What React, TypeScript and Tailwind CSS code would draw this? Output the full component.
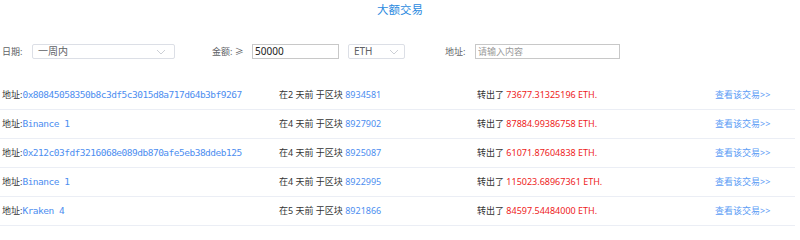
import { useState } from "react";

const rows = [
  { addr: "0x80845058350b8c3df5c3015d8a717d64b3bf9267", days: 2, block: "8934581", amount: "73677.31325196" },
  { addr: "Binance 1", days: 4, block: "8927902", amount: "87884.99386758" },
  { addr: "0x212c03fdf3216068e089db870afe5eb38ddeb125", days: 4, block: "8925087", amount: "61071.87604838" },
  { addr: "Binance 1", days: 4, block: "8922995", amount: "115023.68967361" },
  { addr: "Kraken 4", days: 5, block: "8921866", amount: "84597.54484000" },
];

const Chevron = () => (
  <svg width="10" height="6" viewBox="0 0 10 6" className="text-[#c0c4cc]">
    <path d="M1 1l4 4 4-4" fill="none" stroke="currentColor" strokeWidth="0.8" />
  </svg>
);

const App = () => {
  const [amount, setAmount] = useState("50000");
  const [addr, setAddr] = useState("");

  return (
    <div
      className="w-[800px] h-[240px] bg-white text-[9px] text-[#333]"
      style={{ fontFamily: '"Noto Sans", "Noto Sans CJK SC", sans-serif' }}
    >
      <h1 className="text-center text-[11.5px] leading-[18px] pt-[1px] text-[#2a8ae0]">大额交易</h1>

      <div className="flex items-center mt-[25px] h-[15px] text-[#606266]">
        <span className="ml-[2px] w-[30px]">日期:</span>
        <div className="w-[143px] h-[15px] border border-[#dcdfe6] rounded-[2px] flex items-center justify-between pl-[5px] pr-[8px] text-[10px] text-[#606266]">
          <span>一周内</span>
          <Chevron />
        </div>
        <span className="ml-[37px] w-[40px]">金额: ≥</span>
        <input
          value={amount}
          onChange={(e) => setAmount(e.target.value)}
          className="w-[87px] h-[15px] border border-[#c8c8c8] px-[2px] text-[10px] text-[#222] outline-none"
        />
        <div className="ml-[9px] w-[57px] h-[15px] border border-[#dcdfe6] rounded-[2px] flex items-center justify-between pl-[5px] pr-[5px] text-[10px]">
          <span>ETH</span>
          <Chevron />
        </div>
        <span className="ml-[40px] w-[30px]">地址:</span>
        <input
          value={addr}
          onChange={(e) => setAddr(e.target.value)}
          placeholder="请输入内容"
          className="w-[145px] h-[15px] border border-[#c8c8c8] px-[2px] text-[9px] outline-none placeholder:text-[#9a9a9a]"
        />
      </div>

      <div className="mt-[22px] w-[795px]">
        {rows.map((r, i) => (
          <div
            key={i}
            className="grid grid-cols-[277px_198px_238px_1fr] items-center h-[29px] border-b border-[#ebeef5] pl-[2px]"
          >
            <div className="flex items-center">
              <span>地址:</span>
              <span
                className="text-[#4d8ef0] text-[9.5px] tracking-[-0.5px]"
                style={{ fontFamily: '"DejaVu Sans Mono", monospace' }}
              >
                {r.addr}
              </span>
            </div>
            <div>
              在{r.days} 天前 于区块 <span className="text-[#4d8ef0]">{r.block}</span>
            </div>
            <div>
              转出了 <span className="text-[#ee1c1c]">{r.amount} ETH.</span>
            </div>
            <div className="text-[#5b9cf5]">查看该交易&gt;&gt;</div>
          </div>
        ))}
      </div>
    </div>
  );
};

export default App;
